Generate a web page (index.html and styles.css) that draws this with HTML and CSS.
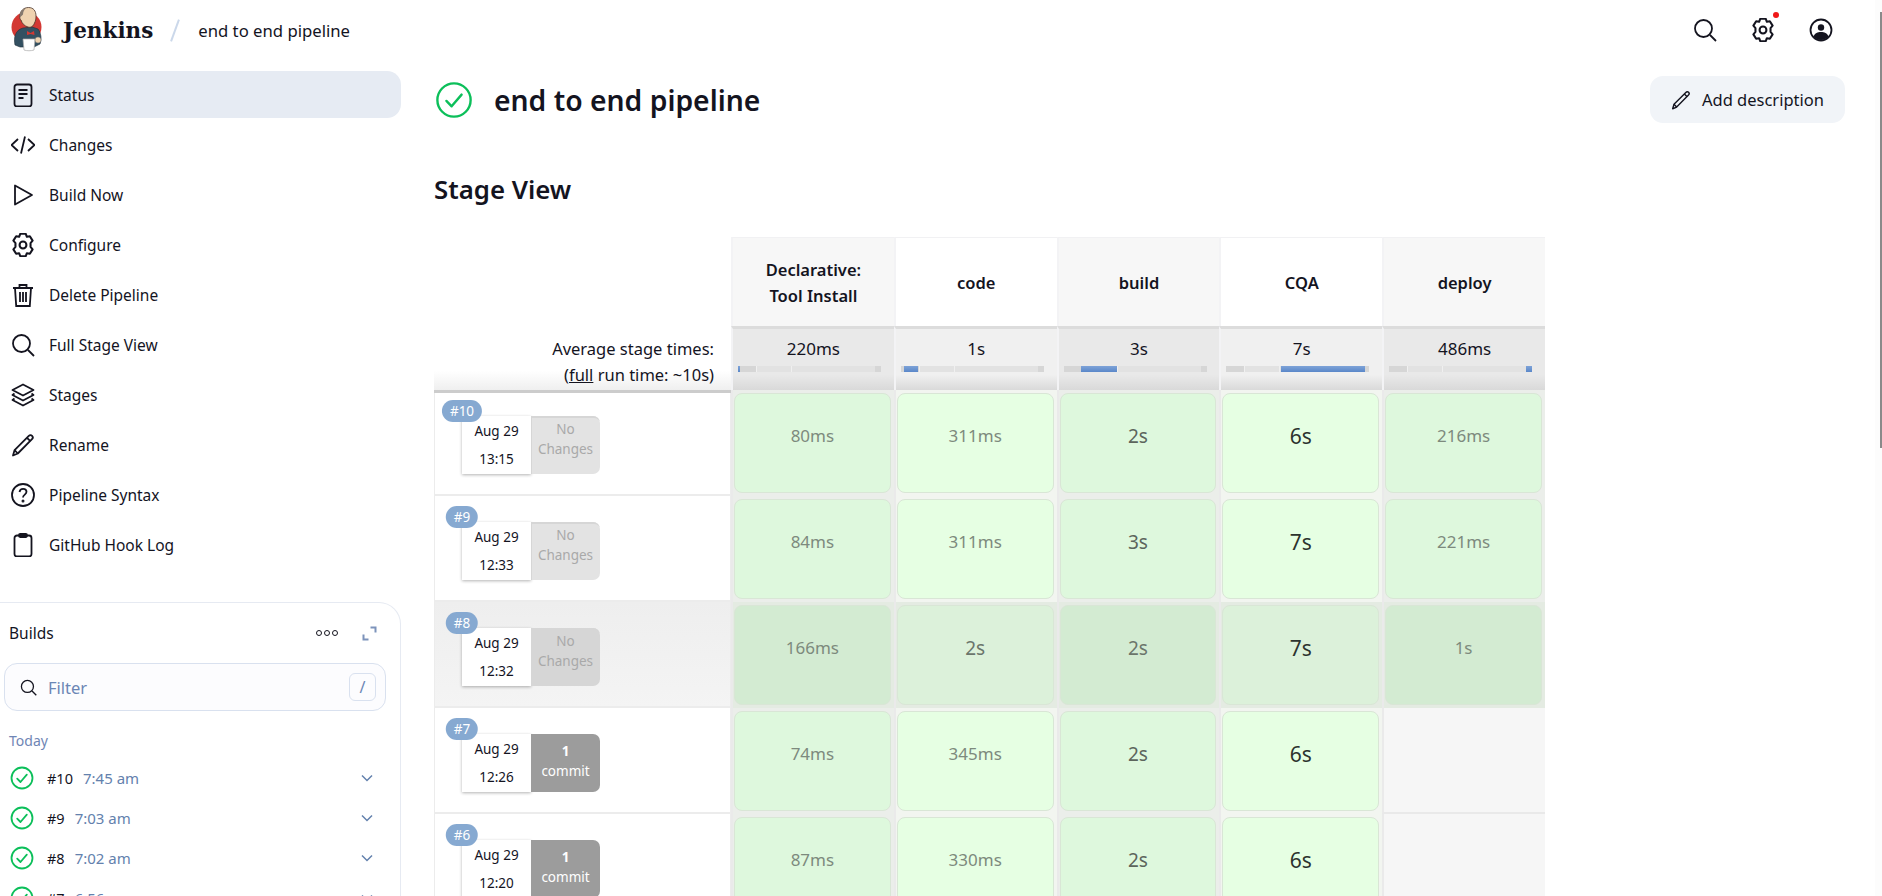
FILE: index.html
```html
<!DOCTYPE html>
<html lang="en">

<head>
    <meta charset="UTF-8">
    <title>end to end pipeline - Jenkins</title>
    <link rel="stylesheet" href="styles.css">
</head>

<body>
    <svg class="icon-defs" width="0" height="0">
        <defs>
            <symbol id="i-search" viewBox="0 0 24 24"><circle cx="10.5" cy="10.5" r="8.5"/><path d="M17 17l6 6"/></symbol>
            <symbol id="i-gear" viewBox="2.5 1.5 19 21"><path d="M9.6 2.2h4.8l1 2.6 2.6-.5 2.4 3.9-1.8 2.1v3.4l1.8 2.1-2.4 3.9-2.6-.5-1 2.6H9.6l-1-2.6-2.6.5-2.4-3.9 1.8-2.1v-3.4L3.600 8.200 6 4.300l2.600.5z" stroke-linejoin="round"/><circle cx="12" cy="12" r="3"/></symbol>
            <symbol id="i-pencil" viewBox="0 0 24 24"><path d="M2 22.500l1.600-5.400L17.800 2.900c1-1 2.400-1 3.300-.1s.9 2.300-.1 3.300L6.800 20.500z" stroke-linejoin="round"/><path d="M16 4.800l3.400 3.400M3.600 17.100l3.200 3.400"/></symbol>
            <symbol id="i-check" viewBox="0 0 24 24"><circle cx="12" cy="12" r="10.500"/><path d="M7.200 12.600l3.300 3.400 6.300-7.400" stroke-linecap="round" stroke-linejoin="round"/></symbol>
        </defs>
    </svg>

    <header class="topbar">
        <svg class="logo" width="34" height="46" viewBox="0 0 34 46">
            <circle cx="15.500" cy="20" r="15" fill="#d33833"/>
            <path d="M4 38c-1.500-7 0-15 8-17l9-1 6 2c3 4 4 10 2 15l-6 3H9z" fill="#335061" stroke="#1f2f3a" stroke-width=".6"/>
            <path d="M9 9c0-5 3.500-8.500 8.500-8.500S25 4 25 9c0 3-.5 5-1.500 7-1 3-3.500 5-6.500 4-3.500-1-6-3.500-7-7-1-.5-1.500-2.500-1-4z" fill="#efd3b0" stroke="#4a342a" stroke-width=".8"/>
            <path d="M9 10C8 6 10.500 2.500 15 1c-2 2-3 4-3 6.500-1 1-2 2-3 2.500z" fill="#85796e"/>
            <path d="M16 24l3.500 2 3.500-2 .5 4-4-1-3.500 1z" fill="#d33833"/>
            <path d="M12 32h12l-1 11c-3 1-7 1-10 0z" fill="#fff" stroke="#aaa" stroke-width=".7"/>
            <circle cx="27" cy="33" r="3" fill="#efd3b0" stroke="#777" stroke-width=".5"/>
        </svg>
        <span class="wordmark">Jenkins</span>
        <span class="crumb-sep"></span>
        <span class="crumb">end to end pipeline</span>
        <div class="top-actions">
            <svg class="ico top-ico"><use href="#i-search"/></svg>
            <span class="gear-wrap">
                <svg class="ico top-ico"><use href="#i-gear"/></svg>
                <span class="red-dot"></span>
            </span>
            <svg class="top-ico" viewBox="0 0 24 24">
                <circle cx="12" cy="12" r="10.500" fill="none" stroke="#14141f" stroke-width="1.800"/>
                <circle cx="12" cy="9.500" r="3.200" fill="#14141f"/>
                <path d="M4.500 18.500c1.500-3.500 4-4.500 7.500-4.500s6 1 7.500 4.500c-4 4.800-11 4.800-15 0z" fill="#14141f"/>
            </svg>
        </div>
    </header>

    <div class="layout">
        <aside class="sidebar">
            <nav class="side-nav">
                <a class="nav-item active">
                    <svg class="ico" viewBox="0 0 24 24"><rect x="3.500" y="1.500" width="17" height="22" rx="2.500"/><path d="M7.500 7h9M7.500 11h9M7.500 15h5"/></svg>
                    Status
                </a>
                <a class="nav-item">
                    <svg class="ico" viewBox="0 0 24 24"><path d="M7 6l-6.500 6L7 18M17 6l6.500 6L17 18M14 3.500l-4 17"/></svg>
                    Changes
                </a>
                <a class="nav-item">
                    <svg class="ico" viewBox="0 0 24 24"><path d="M4 2.500v19L21 12z" stroke-linejoin="round"/></svg>
                    Build Now
                </a>
                <a class="nav-item">
                    <svg class="ico"><use href="#i-gear"/></svg>
                    Configure
                </a>
                <a class="nav-item">
                    <svg class="ico" viewBox="0 0 24 24"><path d="M2 5h20M8.500 4.500V2h7v2.500M4 5l1.200 18h13.600L20 5M9 9v10M12 9v10M15 9v10"/></svg>
                    Delete Pipeline
                </a>
                <a class="nav-item">
                    <svg class="ico"><use href="#i-search"/></svg>
                    Full Stage View
                </a>
                <a class="nav-item">
                    <svg class="ico" viewBox="0 0 24 24"><path d="M12 1.500L1.500 7 12 12.500 22.500 7z" stroke-linejoin="round"/><path d="M3.500 10.500L1.500 12 12 17.500 22.500 12l-2-1.500M3.500 15.500l-2 1.500L12 22.500 22.500 17l-2-1.500" stroke-linejoin="round"/></svg>
                    Stages
                </a>
                <a class="nav-item">
                    <svg class="ico"><use href="#i-pencil"/></svg>
                    Rename
                </a>
                <a class="nav-item">
                    <svg class="ico" viewBox="0 0 24 24"><circle cx="12" cy="12" r="11"/><path d="M8.500 9c.3-2 1.700-3.200 3.600-3.200s3.400 1.200 3.400 3c0 2.900-3.500 2.700-3.500 5.700"/><circle cx="12" cy="18" r=".6"/></svg>
                    Pipeline Syntax
                </a>
                <a class="nav-item">
                    <svg class="ico" viewBox="0 0 24 24"><rect x="3.500" y="2.500" width="17" height="21" rx="2.500"/><rect x="8" y="1" width="8" height="3" rx="1.200"/></svg>
                    GitHub Hook Log
                </a>
            </nav>

            <section class="builds-card">
                <div class="builds-head">
                    <span class="builds-title">Builds</span>
                    <span class="dots"><i></i><i></i><i></i></span>
                    <svg class="expand" width="15" height="15" viewBox="0 0 15 15"><path d="M8.500 1.500h5v5M6.500 13.500h-5v-5"/></svg>
                </div>
                <div class="filter">
                    <svg class="ico filter-ico"><use href="#i-search"/></svg>
                    <span class="filter-text">Filter</span>
                    <kbd class="slash">/</kbd>
                </div>
                <div class="day">Today</div>
                <div class="build-row">
                    <svg class="ico ok"><use href="#i-check"/></svg>
                    <span class="build-no">#10</span><span class="build-time">7:45 am</span>
                    <svg class="chev" width="12" height="8" viewBox="0 0 12 8"><path d="M1 1.500l5 5 5-5"/></svg>
                </div>
                <div class="build-row">
                    <svg class="ico ok"><use href="#i-check"/></svg>
                    <span class="build-no">#9</span><span class="build-time">7:03 am</span>
                    <svg class="chev" width="12" height="8" viewBox="0 0 12 8"><path d="M1 1.500l5 5 5-5"/></svg>
                </div>
                <div class="build-row">
                    <svg class="ico ok"><use href="#i-check"/></svg>
                    <span class="build-no">#8</span><span class="build-time">7:02 am</span>
                    <svg class="chev" width="12" height="8" viewBox="0 0 12 8"><path d="M1 1.500l5 5 5-5"/></svg>
                </div>
                <div class="build-row">
                    <svg class="ico ok"><use href="#i-check"/></svg>
                    <span class="build-no">#7</span><span class="build-time">6:56 am</span>
                    <svg class="chev" width="12" height="8" viewBox="0 0 12 8"><path d="M1 1.500l5 5 5-5"/></svg>
                </div>
            </section>
        </aside>

        <main class="content">
            <div class="title-row">
                <svg class="ico ok title-ok"><use href="#i-check"/></svg>
                <h1>end to end pipeline</h1>
                <button class="add-desc">
                    <svg class="ico pencil"><use href="#i-pencil"/></svg>
                    Add description
                </button>
            </div>

            <h2>Stage View</h2>

            <div class="stage-grid">
                <div class="blank"></div>
                <div class="stage-head shade">Declarative:<br>Tool Install</div>
                <div class="stage-head">code</div>
                <div class="stage-head shade">build</div>
                <div class="stage-head">CQA</div>
                <div class="stage-head shade">deploy</div>

                <div class="avg-label">Average stage times:<br>(<u>full</u> run time: ~10s)</div>
                <div class="avg shade">220ms<div class="track"><span style="left:0;width:1.4%"></span></div></div>
                <div class="avg">1s<div class="track"><span style="left:2%;width:10%"></span></div></div>
                <div class="avg shade">3s<div class="track"><span style="left:12%;width:25%"></span></div></div>
                <div class="avg">7s<div class="track"><span style="left:38%;width:59%"></span></div></div>
                <div class="avg shade">486ms<div class="track"><span style="left:96%;width:4%"></span></div></div>

                <div class="run">
                    <span class="badge">#10</span>
                    <div class="run-date">Aug 29<br>13:15</div>
                    <div class="run-changes none">No<br>Changes</div>
                </div>
                <div class="gcell shade"><div class="box">80ms</div></div>
                <div class="gcell"><div class="box">311ms</div></div>
                <div class="gcell shade"><div class="box mid">2s</div></div>
                <div class="gcell"><div class="box big">6s</div></div>
                <div class="gcell shade"><div class="box">216ms</div></div>

                <div class="run">
                    <span class="badge">#9</span>
                    <div class="run-date">Aug 29<br>12:33</div>
                    <div class="run-changes none">No<br>Changes</div>
                </div>
                <div class="gcell shade"><div class="box">84ms</div></div>
                <div class="gcell"><div class="box">311ms</div></div>
                <div class="gcell shade"><div class="box mid">3s</div></div>
                <div class="gcell"><div class="box big">7s</div></div>
                <div class="gcell shade"><div class="box">221ms</div></div>

                <div class="run hover">
                    <span class="badge">#8</span>
                    <div class="run-date">Aug 29<br>12:32</div>
                    <div class="run-changes none">No<br>Changes</div>
                </div>
                <div class="gcell shade hover"><div class="box">166ms</div></div>
                <div class="gcell hover"><div class="box mid">2s</div></div>
                <div class="gcell shade hover"><div class="box mid">2s</div></div>
                <div class="gcell hover"><div class="box big">7s</div></div>
                <div class="gcell shade hover"><div class="box">1s</div></div>

                <div class="run">
                    <span class="badge">#7</span>
                    <div class="run-date">Aug 29<br>12:26</div>
                    <div class="run-changes"><b>1</b><br>commit</div>
                </div>
                <div class="gcell shade"><div class="box">74ms</div></div>
                <div class="gcell"><div class="box">345ms</div></div>
                <div class="gcell shade"><div class="box mid">2s</div></div>
                <div class="gcell"><div class="box big">6s</div></div>
                <div class="gcell empty"></div>

                <div class="run">
                    <span class="badge">#6</span>
                    <div class="run-date">Aug 29<br>12:20</div>
                    <div class="run-changes"><b>1</b><br>commit</div>
                </div>
                <div class="gcell shade"><div class="box">87ms</div></div>
                <div class="gcell"><div class="box">330ms</div></div>
                <div class="gcell shade"><div class="box mid">2s</div></div>
                <div class="gcell"><div class="box big">6s</div></div>
                <div class="gcell empty"></div>
            </div>
        </main>
    </div>

    <div class="scrollbar"><span></span></div>
</body>

</html>
```

FILE: styles.css
```css
* {
    box-sizing: border-box;
}

body {
    margin: 0;
    height: 896px;
    overflow: hidden;
    background: #fff;
    color: #14141f;
    font-family: "Noto Sans", sans-serif;
    font-size: 15.5px;
}

.icon-defs {
    position: absolute;
}

.ico {
    width: 24px;
    height: 24px;
    flex: none;
    fill: none;
    stroke: #14141f;
    stroke-width: 1.8;
}

/* page scrollbar, sits over the page */
.scrollbar {
    position: absolute;
    top: 0;
    right: 0;
    width: 7px;
    height: 896px;
    background: #fcfcfc;
}

.scrollbar span {
    position: absolute;
    top: 12px;
    right: 0;
    width: 2px;
    height: 436px;
    background: #8a8a8a;
}

/* top bar */
.topbar {
    display: flex;
    align-items: center;
    height: 60px;
    padding-left: 11px;
}

.logo {
    flex: none;
}

.wordmark {
    margin-left: 18px;
    font-family: "DejaVu Serif", serif;
    font-weight: 700;
    font-size: 21.5px;
}

.crumb-sep {
    width: 2px;
    height: 23px;
    margin-left: 21px;
    background: #cbd8ea;
    transform: rotate(20deg);
}

.crumb {
    margin-left: 22px;
    font-size: 16.7px;
}

.top-actions {
    display: flex;
    align-items: center;
    gap: 34px;
    margin-left: auto;
    margin-right: 49px;
}

.top-ico {
    display: block;
    width: 24px;
    height: 24px;
}

.gear-wrap {
    position: relative;
    display: block;
}

.red-dot {
    position: absolute;
    top: -6px;
    right: -4px;
    width: 6px;
    height: 6px;
    border-radius: 50%;
    background: #f01919;
}

.layout {
    display: flex;
    align-items: flex-start;
}

/* sidebar */
.sidebar {
    flex: none;
    width: 401px;
}

.side-nav {
    display: flex;
    flex-direction: column;
    gap: 3px;
    margin-top: 11px;
}

.nav-item {
    display: flex;
    align-items: center;
    gap: 14px;
    height: 47px;
    padding-left: 11px;
    border-radius: 0 14px 14px 0;
}

.nav-item.active {
    background: #e6ebf3;
}

.builds-card {
    height: 340px;
    margin-top: 34px;
    padding: 0 14px 0 4px;
    border: 1px solid #e6eaf2;
    border-left: 0;
    border-radius: 0 22px 0 0;
}

.builds-head {
    display: flex;
    align-items: center;
    height: 60px;
    padding-left: 5px;
}

.builds-title {
    flex: 1;
}

.dots {
    display: flex;
    gap: 2px;
    margin-right: 24px;
}

.dots i {
    width: 6px;
    height: 6px;
    border: 1.5px solid #14141f;
    border-radius: 50%;
}

.expand {
    margin-right: 9px;
    fill: none;
    stroke: #7d93bb;
    stroke-width: 2;
}

.filter {
    display: flex;
    align-items: center;
    height: 48px;
    padding: 0 9px 0 15px;
    border: 1px solid #d9e1ef;
    border-radius: 13px;
    background: #fcfcfe;
    font-size: 16.5px;
}

.filter-ico {
    width: 17px;
    height: 17px;
}

.filter-text {
    flex: 1;
    margin-left: 11px;
    color: #6b86b5;
}

.slash {
    width: 27px;
    height: 28px;
    border: 1px solid #d9e1ef;
    border-radius: 6px;
    color: #6b86b5;
    font-family: inherit;
    font-size: 16px;
    line-height: 26px;
    text-align: center;
}

.day {
    margin: 20px 0 8px 5px;
    color: #6f86b5;
    font-size: 14px;
}

.build-row {
    display: flex;
    align-items: center;
    height: 40px;
    padding-left: 6px;
    font-size: 14.5px;
}

.ok {
    stroke: #0cbf5a;
}

.build-no {
    margin-left: 13px;
}

.build-time {
    flex: 1;
    margin-left: 10px;
    color: #6381ad;
    font-size: 15px;
}

.chev {
    margin-right: 13px;
    fill: none;
    stroke: #6381ad;
    stroke-width: 1.5;
}

/* main */
.content {
    flex: 1;
    min-width: 0;
    padding: 16px 37px 0 33px;
}

.title-row {
    display: flex;
    align-items: center;
    height: 47px;
}

.title-ok {
    width: 38px;
    height: 38px;
    margin-left: 1px;
    stroke-width: 1.5;
}

.title-row h1 {
    flex: 1;
    margin: 0 0 0 21px;
    font-size: 28.3px;
    font-weight: 600;
}

.add-desc {
    display: flex;
    align-items: center;
    gap: 11px;
    height: 47px;
    padding: 0 21px;
    border: 0;
    border-radius: 13px;
    background: #f1f4f8;
    color: #14141f;
    font: inherit;
    font-size: 16.5px;
}

.pencil {
    width: 20px;
    height: 20px;
    stroke-width: 1.7;
}

h2 {
    margin: 46px 0 28px;
    font-size: 25.8px;
    font-weight: 600;
    line-height: 40px;
}

/* stage view */
.stage-grid {
    display: grid;
    grid-template-columns: 297px repeat(5, 162.8px);
    grid-template-rows: 89px 64px;
    grid-auto-rows: 106px;
    font-size: 16.5px;
}

.stage-head {
    display: flex;
    align-items: center;
    justify-content: center;
    padding-top: 2px;
    border-top: 1px solid #f1f1f3;
    border-left: 2px solid #f3f3f5;
    font-weight: 600;
    line-height: 26px;
    text-align: center;
}

.stage-head.shade {
    background: #f7f7f7;
}

.avg-label {
    position: relative;
    z-index: 1;
    padding: 10px 17px 0 0;
    box-shadow: 0 3px 0 #ccc;
    background: linear-gradient(#fff 70%, #efefef);
    line-height: 26px;
    text-align: right;
}

.avg {
    padding-top: 7px;
    border-top: 3px solid #dcdcdc;
    border-left: 2px solid #f3f3f5;
    background: linear-gradient(#f0f0f0 75%, #d9d9d9);
    font-size: 17px;
    line-height: 26px;
    text-align: center;
}

.avg.shade {
    background: linear-gradient(#e9e9e9 75%, #d9d9d9);
}

.track {
    position: relative;
    width: 143px;
    height: 6px;
    margin: 4px 0 0 5px;
    background: linear-gradient(90deg, #d6d6d6 12.5%, #f0f0f0 12.5%, #f0f0f0 13%, #e2e2e2 13%, #e2e2e2 37%, #f0f0f0 37%, #f0f0f0 37.5%, #e2e2e2 37.5%, #e2e2e2 96%, #d6d6d6 96%);
}

.track span {
    position: absolute;
    top: 0;
    bottom: 0;
    background: linear-gradient(#7ea3d8, #5a87c9);
}

.run {
    position: relative;
    display: flex;
    align-items: flex-start;
    padding: 26px 0 0 27px;
    border: 1px solid #ececec;
    border-top: 0;
    border-bottom-width: 2px;
    font-size: 13.5px;
}

.run.hover {
    background: linear-gradient(#eee, #f4f4f4);
}

.badge {
    position: absolute;
    top: 10px;
    left: 27px;
    padding: 0 8px;
    border-radius: 11px;
    background: #86a9d1;
    color: #fff;
    font-size: 13.5px;
    line-height: 22px;
    transform: translateX(-50%);
}

.run-date {
    width: 69px;
    height: 58px;
    padding-top: 1px;
    background: #fff;
    box-shadow: 0 1px 3px rgba(0, 0, 0, .3);
    line-height: 28px;
    text-align: center;
}

.run-changes {
    width: 69px;
    height: 58px;
    padding-top: 7px;
    border-radius: 0 7px 7px 0;
    background: #9c9c9c;
    color: #fff;
    line-height: 20px;
    text-align: center;
}

.run-changes.none {
    padding-top: 3px;
    background: #e3e3e3;
    box-shadow: inset 1px 2px 0 #d6d6d6;
    color: #a9a9a9;
}

.hover .run-changes.none {
    background: #d6d6d6;
}

.gcell {
    padding: 3px 3px 3px 1px;
    border-left: 2px solid #eaeaea;
    background: #f2f5f0;
}

.gcell.shade {
    background: #ebeeea;
}

.box {
    height: 100%;
    padding-top: 29px;
    border: 1px solid #d9e6d6;
    border-radius: 8px;
    background: #e6ffe3;
    color: #7d8a7d;
    font-size: 17px;
    line-height: 26px;
    text-align: center;
}

.shade .box {
    background: #def8dd;
}

.box.mid {
    color: #5c655c;
    font-size: 19px;
}

.box.big {
    color: #2c332e;
    font-size: 21px;
}

.gcell.hover {
    background: #e4ebe2;
}

.hover .box {
    background: #dcf1da;
}

.hover .box.mid {
    color: #6b756b;
}

.hover.shade .box {
    background: #d3ebd2;
}

.gcell.empty {
    border-bottom: 2px solid #e9e9e9;
    background: #f6f6f6;
}
```
